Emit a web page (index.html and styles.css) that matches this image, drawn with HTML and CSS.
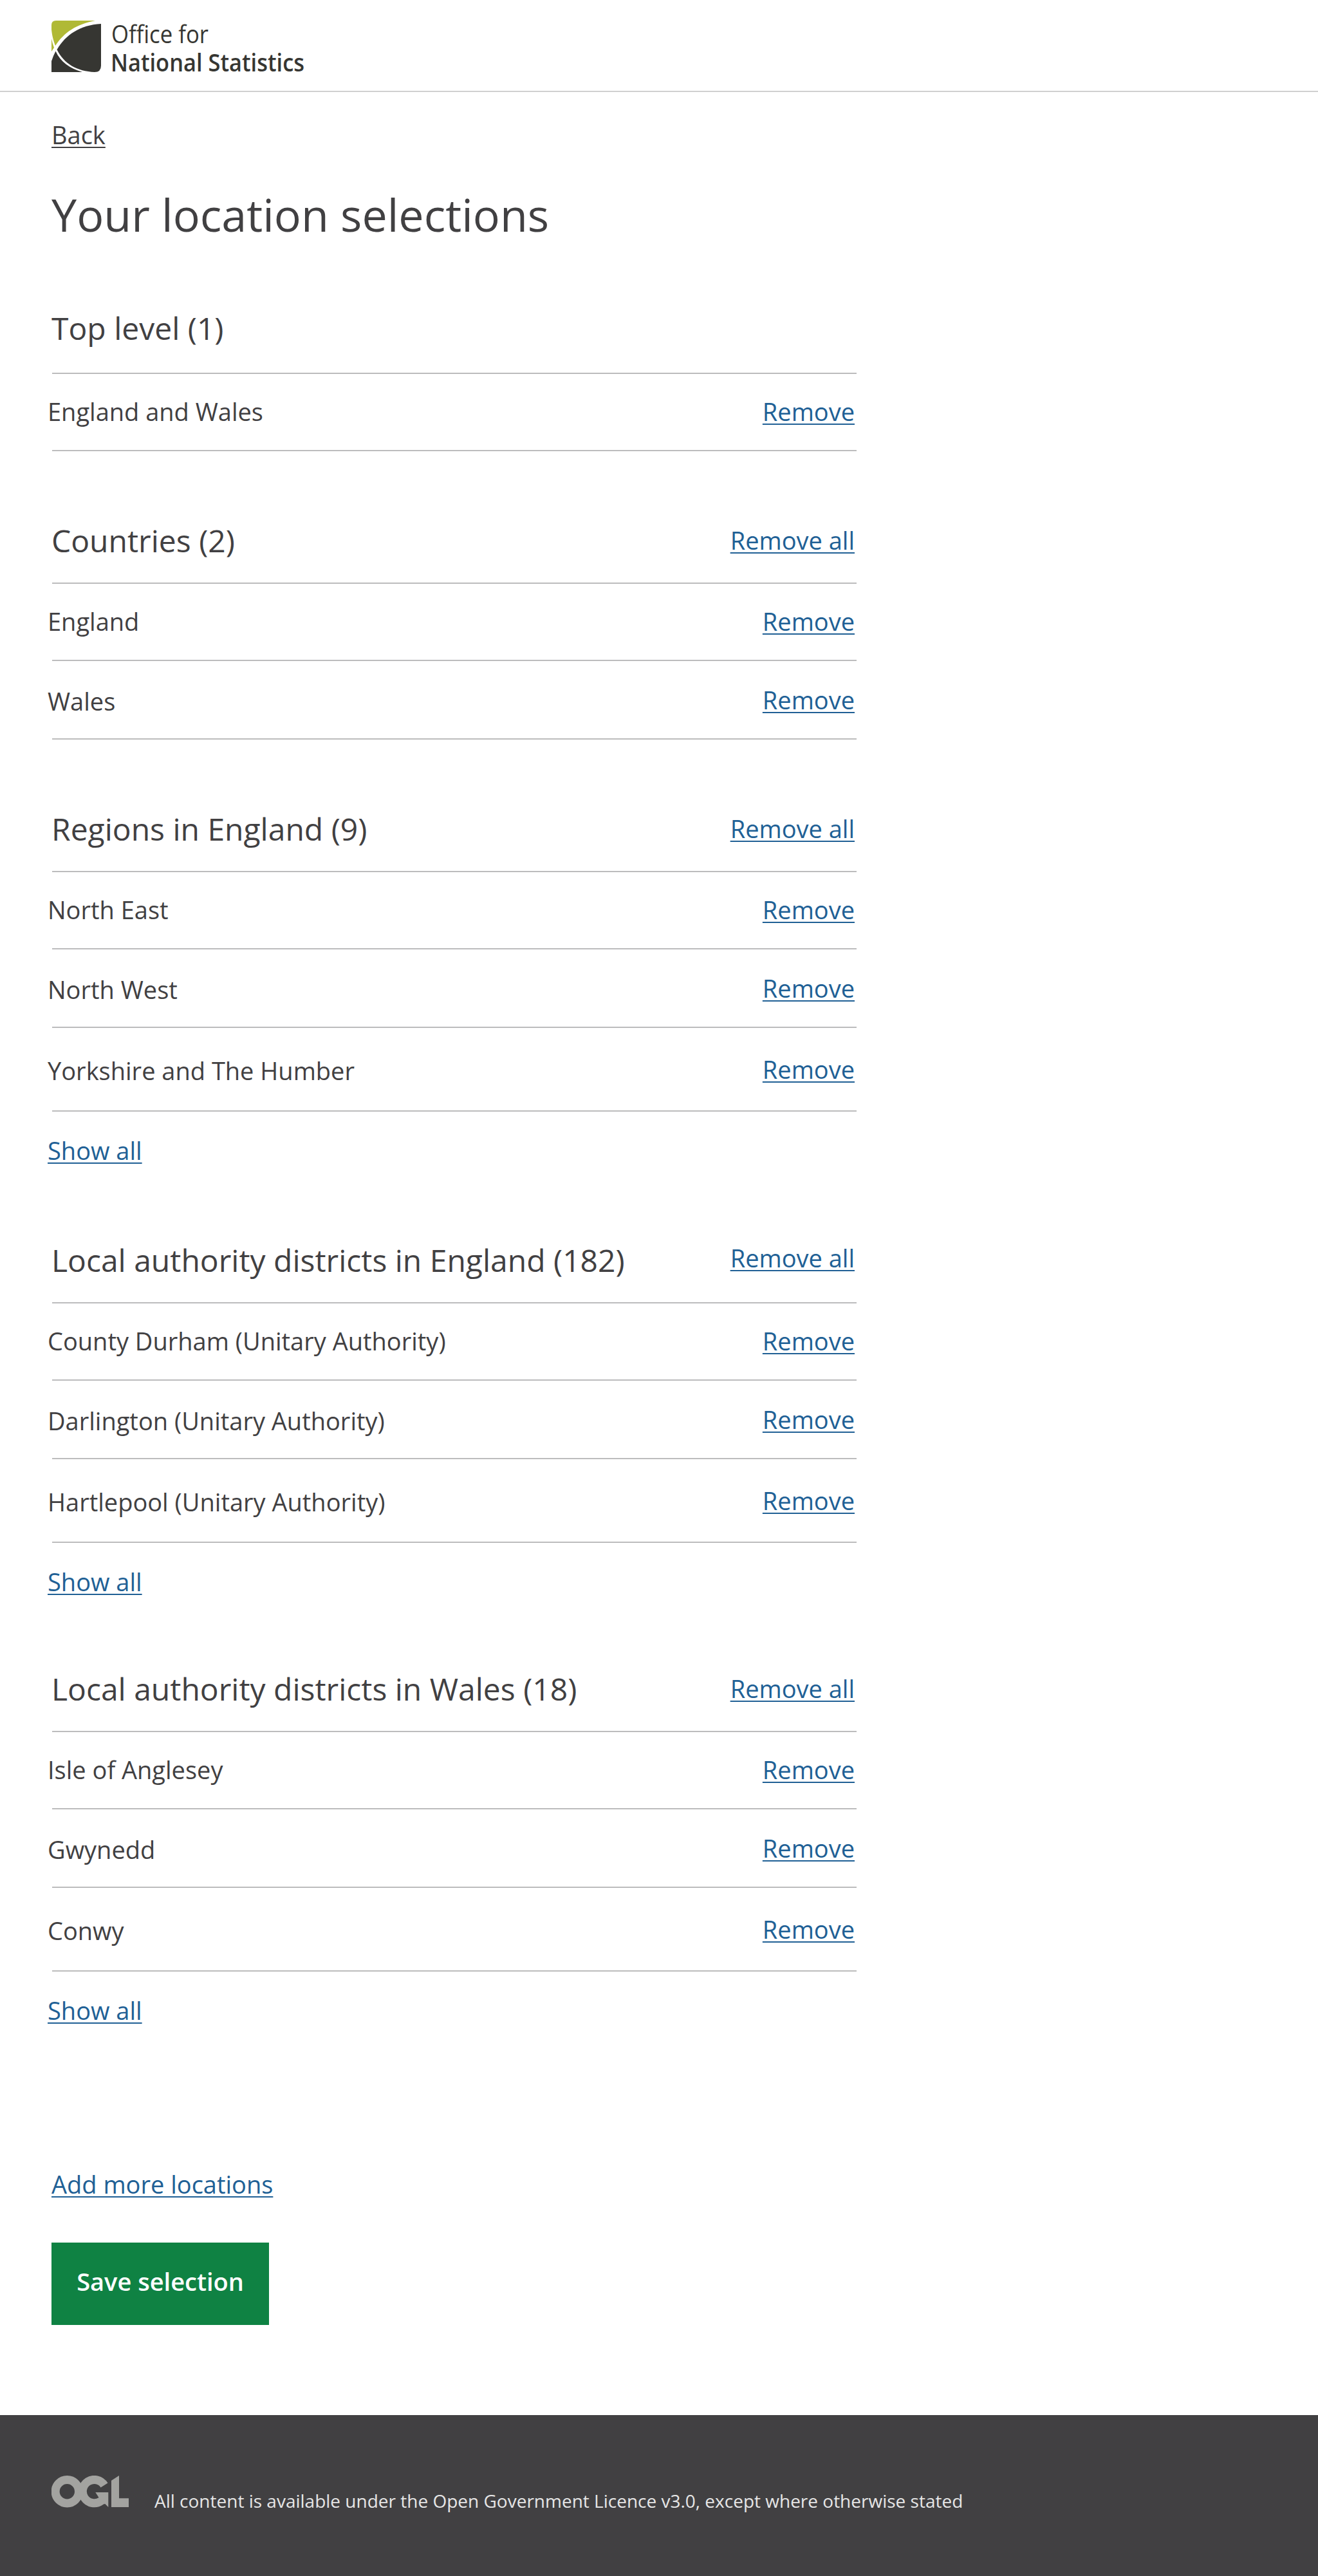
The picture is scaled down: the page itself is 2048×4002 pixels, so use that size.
FILE: index.html
```html
<!DOCTYPE html>
<html lang="en">
<head>
<meta charset="utf-8">
<title>Your location selections - Office for National Statistics</title>
<link rel="stylesheet" href="styles.css">
</head>
<body>
<header class="site-header">
  <svg class="logo" width="400" height="84" viewBox="0 0 400 84" role="img" aria-label="Office for National Statistics">
    <path fill="#b0b935" d="M7 0H68C38 6 20 18 6 39C3 31 1 24 0 14V7Q0 0 7 0Z"/>
    <path fill="#b0b935" d="M0 28Q1 34 4 42Q2 45 0 48Z"/>
    <path fill="#363632" d="M77 5V70Q77 80 67 80C40 79 19 67 8.500 45C22 22 44 7 77 5Z"/>
    <path fill="#363632" d="M6.500 47.500C14 64 28 74 48 80H0V63Q3 54 6.500 47.500Z"/>
    <text class="logo-light" x="93" y="35" textLength="151" lengthAdjust="spacingAndGlyphs">Office for</text>
    <text class="logo-bold" x="92" y="79" textLength="301" lengthAdjust="spacingAndGlyphs">National Statistics</text>
  </svg>
</header>
<main class="page">
  <a class="back" href="#">Back</a>
  <h1 class="title">Your location selections</h1>

  <section class="group">
    <div class="head head-first"><h2>Top level (1)</h2></div>
    <ul class="rows">
      <li><span>England and Wales</span><a href="#">Remove</a></li>
    </ul>
  </section>

  <section class="group">
    <div class="head"><h2>Countries (2)</h2><a href="#">Remove all</a></div>
    <ul class="rows">
      <li><span>England</span><a href="#">Remove</a></li>
      <li><span>Wales</span><a href="#">Remove</a></li>
    </ul>
  </section>

  <section class="group">
    <div class="head"><h2>Regions in England (9)</h2><a href="#">Remove all</a></div>
    <ul class="rows">
      <li><span>North East</span><a href="#">Remove</a></li>
      <li><span>North West</span><a href="#">Remove</a></li>
      <li><span>Yorkshire and The Humber</span><a href="#">Remove</a></li>
    </ul>
    <div class="show"><a href="#">Show all</a></div>
  </section>

  <section class="group">
    <div class="head head-raised"><h2>Local authority districts in England (182)</h2><a href="#">Remove all</a></div>
    <ul class="rows">
      <li><span>County Durham (Unitary Authority)</span><a href="#">Remove</a></li>
      <li><span>Darlington (Unitary Authority)</span><a href="#">Remove</a></li>
      <li><span>Hartlepool (Unitary Authority)</span><a href="#">Remove</a></li>
    </ul>
    <div class="show show-short"><a href="#">Show all</a></div>
  </section>

  <section class="group">
    <div class="head"><h2>Local authority districts in Wales (18)</h2><a href="#">Remove all</a></div>
    <ul class="rows">
      <li><span>Isle of Anglesey</span><a href="#">Remove</a></li>
      <li><span>Gwynedd</span><a href="#">Remove</a></li>
      <li><span>Conwy</span><a href="#">Remove</a></li>
    </ul>
    <div class="show"><a href="#">Show all</a></div>
  </section>

  <div class="actions">
    <a href="#">Add more locations</a>
    <button class="save" type="button">Save selection</button>
  </div>
</main>
<footer class="site-footer">
  <svg class="ogl" width="120" height="50" viewBox="0 0 120 50" role="img" aria-label="OGL">
    <g fill="none" stroke="#a3a3a0" stroke-width="13">
      <circle cx="24.300" cy="24.800" r="18.200"/>
      <path d="M82 15A18.200 18.200 0 1 0 77 39.500"/>
    </g>
    <path fill="#a3a3a0" d="M68.300 26H88.300V49L83.300 44L74 46V36L72.700 32.700ZM93 7.700L105 0V35.300H120V49H93Z"/>
  </svg>
  <p>All content is available under the Open Government Licence v3.0, except where otherwise stated</p>
</footer>
</body>
</html>
```
FILE: styles.css
```css
* {
  box-sizing: border-box;
}

body {
  margin: 0;
  min-height: 4002px;
  display: flex;
  flex-direction: column;
  background: #fff;
  color: #414042;
  font: 400 38px/60px "Open Sans", sans-serif;
}

a {
  color: #206095;
  text-decoration: underline;
  text-decoration-thickness: 2px;
  text-underline-offset: 4px;
}

.site-header {
  height: 143px;
  padding: 32px 80px 0;
  border-bottom: 2px solid #d0d0d0;
}

.logo {
  display: block;
  overflow: visible;
}

.logo text {
  fill: #363632;
  font-size: 38px;
}

.logo .logo-light {
  font-weight: 400;
}

.logo .logo-bold {
  font-weight: 600;
}

.page {
  width: 1331px;
  padding: 36px 0 0 80px;
}

.back {
  display: block;
  width: max-content;
  color: #414042;
}

.title {
  margin: 49px 0 0;
  font-size: 70px;
  font-weight: 400;
  line-height: 90px;
}

.group {
  margin-left: 1px;
}

.head {
  display: flex;
  justify-content: space-between;
  align-items: flex-start;
  height: 206px;
  padding: 108px 3px 0 0;
  border-bottom: 2px solid #bcbcbd;
}

.head-first {
  height: 203px;
  padding-top: 101px;
}

.head h2 {
  margin: 1px 0 0 -1px;
  font-size: 48px;
  font-weight: 400;
  line-height: 60px;
}

.head-raised a {
  margin-top: -3px;
}

.rows {
  margin: 0;
  padding: 0;
  list-style: none;
}

.rows li {
  display: flex;
  justify-content: space-between;
  height: 120px;
  padding: 28px 3px 0 0;
  border-bottom: 2px solid #bcbcbd;
}

.rows span {
  margin-left: -7px;
}

.rows li + li {
  height: 122px;
  padding-top: 30px;
}

.rows li + li span {
  padding-top: 2px;
}

.rows li + li + li {
  height: 130px;
  padding-top: 34px;
}

.show {
  height: 92px;
  padding-top: 30px;
  margin-left: -7px;
}

.show-short {
  height: 88px;
}

.actions {
  display: flex;
  flex-direction: column;
  align-items: flex-start;
  gap: 61px;
  padding-top: 208px;
}

.save {
  width: 338px;
  height: 128px;
  padding: 0 0 9px;
  border: 0;
  background: #0f8243;
  color: #fff;
  font: 600 38px/60px "Open Sans", sans-serif;
}

.site-footer {
  display: flex;
  align-items: flex-start;
  gap: 40px;
  height: 250px;
  margin-top: auto;
  padding: 94px 80px 0;
  background: #414042;
  color: #e6e6e6;
}

.ogl {
  flex: none;
}

.site-footer p {
  margin: 9px 0 0;
  font-size: 28px;
}
```
